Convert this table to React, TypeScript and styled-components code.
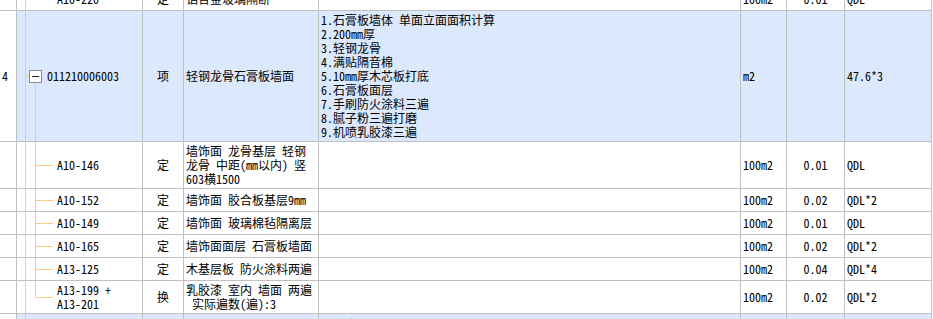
import React from 'react';
import styled, { createGlobalStyle } from 'styled-components';

const GRID = '#c0c0c0';
const TREE = '#ffc88a';
const SELECTED = '#dce8fc';
const COLS = '17px 126px 41px 135px 422px 46px 58px 87px';

const GlobalStyle = createGlobalStyle`
  html, body {
    margin: 0;
    padding: 0;
    background: #fff;
    overflow: hidden;
  }
`;

const Viewport = styled.div`
  width: 933px;
  height: 319px;
  overflow: hidden;
  background: #fff;
  color: #000;
  font-family: "Noto Sans Mono CJK SC", "Noto Sans CJK SC", "Liberation Mono", monospace;
  font-size: 12px;
  line-height: 14px;
`;

// the grid is scrolled: the first row is cut off at the top
const Sheet = styled.div`
  display: flex;
  flex-direction: column;
  width: 932px;
  margin-top: -12px;
`;

const Row = styled.div<{ $h: number; $selected?: boolean }>`
  flex: none;
  display: grid;
  grid-template-columns: ${COLS};
  height: ${p => p.$h}px;
  background: ${p => (p.$selected ? SELECTED : '#fff')};
`;

const Cell = styled.div<{ $align?: 'left' | 'center' }>`
  display: flex;
  flex-direction: column;
  justify-content: center;
  align-items: ${p => (p.$align === 'center' ? 'center' : 'flex-start')};
  padding: 0 2px;
  border-right: 1px solid ${GRID};
  border-bottom: 1px solid ${GRID};
  white-space: pre;
  overflow: hidden;
  min-width: 0;
`;

const NumCell = styled(Cell)`
  background: #fff;
`;

type Node = 'parent' | 'child' | 'last';

const line = `linear-gradient(${TREE}, ${TREE})`;
const treeLines: Record<Node, string> = {
  parent: `${line} 8px 0 / 1px 100% no-repeat, ${line} 8px 50% / 4px 1px no-repeat, ${line} 18px 100% / 1px 50% no-repeat`,
  child: `${line} 8px 0 / 1px 100% no-repeat, ${line} 18px 0 / 1px 100% no-repeat, ${line} 19px 50% / 17px 1px no-repeat`,
  last: `${line} 8px 0 / 1px 100% no-repeat, ${line} 18px 0 / 1px 50% no-repeat, ${line} 19px 50% / 17px 1px no-repeat`,
};

const TreeCell = styled.div<{ $node: Node }>`
  display: flex;
  align-items: center;
  padding-left: ${p => (p.$node === 'parent' ? 12 : 40)}px;
  border-right: 1px solid ${GRID};
  border-bottom: 1px solid ${GRID};
  background: ${p => treeLines[p.$node]};
  white-space: pre;
  overflow: hidden;
`;

const Toggle = styled.span`
  flex: none;
  position: relative;
  width: 11px;
  height: 11px;
  margin-right: 5px;
  border: 1px solid #8a8a8a;
  background: #fff;

  &::after {
    content: '';
    position: absolute;
    left: 2px;
    right: 2px;
    top: 5px;
    height: 1px;
    background: #202020;
  }
`;

const Lines = styled.div`
  display: flex;
  flex-direction: column;
`;

interface Item {
  no?: string;
  node: Node;
  code: string[];
  kind: string;
  name: string[];
  feature?: string[];
  unit: string;
  qty?: string;
  expr: string;
  h: number;
  selected?: boolean;
}

const items: Item[] = [
  { node: 'last', code: ['A10-220'], kind: '定', name: ['铝合金玻璃隔断'], unit: '100m2', qty: '0.01', expr: 'QDL', h: 23 },
  {
    no: '4',
    node: 'parent',
    code: ['011210006003'],
    kind: '项',
    name: ['轻钢龙骨石膏板墙面'],
    feature: [
      '1.石膏板墙体 单面立面面积计算',
      '2.200mm厚',
      '3.轻钢龙骨',
      '4.满贴隔音棉',
      '5.10mm厚木芯板打底',
      '6.石膏板面层',
      '7.手刷防火涂料三遍',
      '8.腻子粉三遍打磨',
      '9.机喷乳胶漆三遍',
    ],
    unit: 'm2',
    expr: '47.6*3',
    h: 131,
    selected: true,
  },
  { node: 'child', code: ['A10-146'], kind: '定', name: ['墙饰面 龙骨基层 轻钢', '龙骨 中距(mm以内) 竖', '603横1500'], unit: '100m2', qty: '0.01', expr: 'QDL', h: 47 },
  { node: 'child', code: ['A10-152'], kind: '定', name: ['墙饰面 胶合板基层9mm'], unit: '100m2', qty: '0.02', expr: 'QDL*2', h: 23 },
  { node: 'child', code: ['A10-149'], kind: '定', name: ['墙饰面 玻璃棉毡隔离层'], unit: '100m2', qty: '0.01', expr: 'QDL', h: 23 },
  { node: 'child', code: ['A10-165'], kind: '定', name: ['墙饰面面层 石膏板墙面'], unit: '100m2', qty: '0.02', expr: 'QDL*2', h: 23 },
  { node: 'child', code: ['A13-125'], kind: '定', name: ['木基层板 防火涂料两遍'], unit: '100m2', qty: '0.04', expr: 'QDL*4', h: 23 },
  { node: 'last', code: ['A13-199 +', 'A13-201'], kind: '换', name: ['乳胶漆 室内 墙面 两遍', ' 实际遍数(遍):3'], unit: '100m2', qty: '0.02', expr: 'QDL*2', h: 33 },
  {
    no: '5',
    node: 'parent',
    code: ['011210006004'],
    kind: '项',
    name: ['轻钢龙骨隔墙'],
    feature: ['1.石膏板墙体 单面立面面积计算'],
    unit: 'm2',
    expr: '35.2',
    h: 23,
    selected: true,
  },
];

const Text = ({ lines }: { lines: string[] }) => (
  <Lines>
    {lines.map((l, i) => (
      <span key={i}>{l}</span>
    ))}
  </Lines>
);

export default function App() {
  return (
    <>
      <GlobalStyle />
      <Viewport>
        <Sheet>
          {items.map((it, i) => (
            <Row key={i} $h={it.h} $selected={it.selected}>
              <NumCell>{it.no ?? ''}</NumCell>
              <TreeCell $node={it.node}>
                {it.node === 'parent' && <Toggle />}
                <Text lines={it.code} />
              </TreeCell>
              <Cell $align="center">{it.kind}</Cell>
              <Cell>
                <Text lines={it.name} />
              </Cell>
              <Cell>{it.feature && <Text lines={it.feature} />}</Cell>
              <Cell>{it.unit}</Cell>
              <Cell $align="center">{it.qty ?? ''}</Cell>
              <Cell>{it.expr}</Cell>
            </Row>
          ))}
        </Sheet>
      </Viewport>
    </>
  );
}
